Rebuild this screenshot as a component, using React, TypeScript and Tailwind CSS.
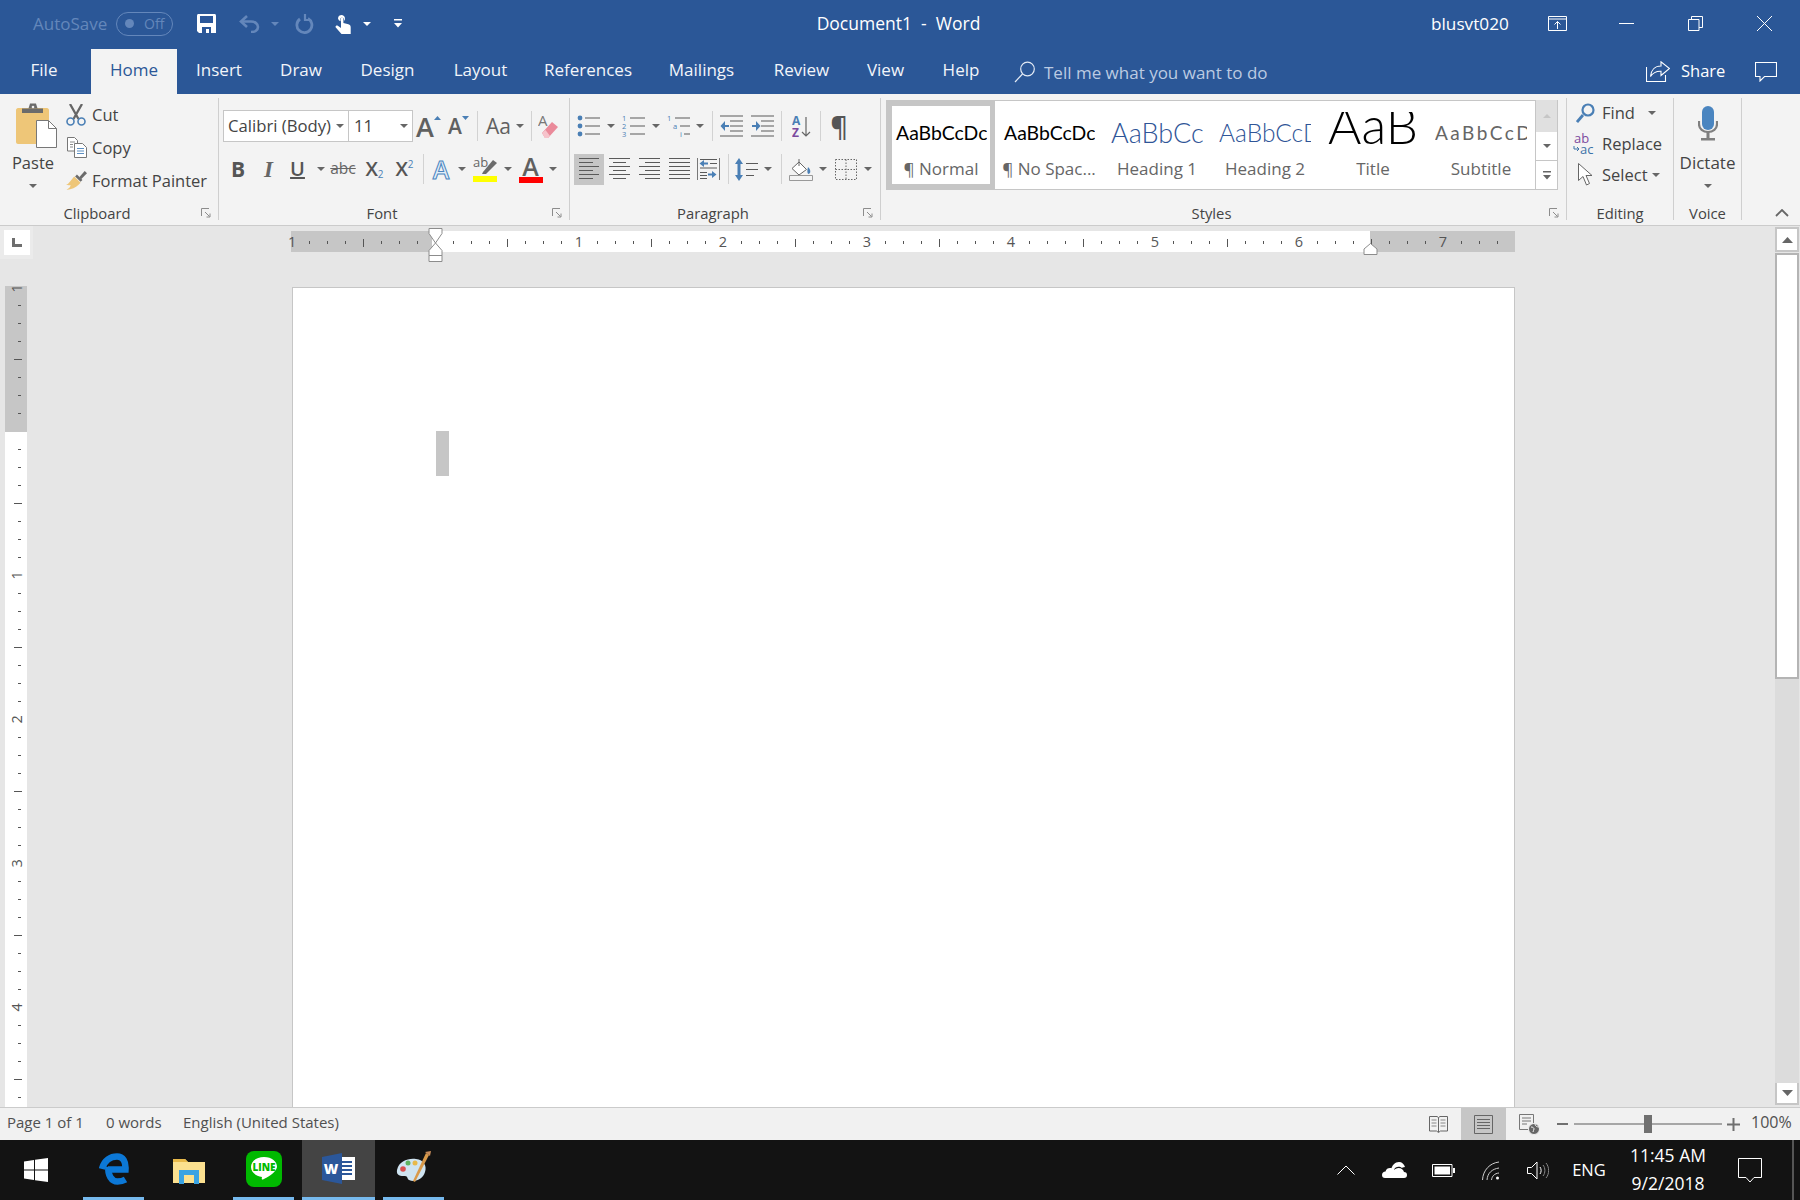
import type { ReactNode } from 'react'

const GREY = '#5a5a5a'
const BLUE = '#4a7fb5'

function Caret({ color = '#666' }: { color?: string }) {
  return (
    <svg width="8" height="4" viewBox="0 0 8 4" className="shrink-0">
      <path d="M0 0h8L4 4z" fill={color} />
    </svg>
  )
}

function CaretCell() {
  return (
    <div className="flex w-[8px] justify-center">
      <Caret />
    </div>
  )
}

// fixed width slot, content centered
function Cell({ className, children }: { className: string; children?: ReactNode }) {
  return <div className={`flex shrink-0 items-center justify-center ${className}`}>{children}</div>
}

function Sep() {
  return <div className="h-[30px] w-px shrink-0 bg-[#d2d2d2]" />
}

function Launcher() {
  return (
    <svg width="10" height="10" viewBox="0 0 10 10" fill="none" stroke="#8c8c8c">
      <path d="M.5 8V.5H8" />
      <path d="M4 4l4.5 4.5M9 5.5V9H5.5" />
    </svg>
  )
}

function Group({
  label,
  launcher,
  className,
  children,
}: {
  label: string
  launcher?: boolean
  className: string
  children: ReactNode
}) {
  return (
    <div className={`mt-[4px] flex h-[122px] shrink-0 flex-col border-r border-[#cfcfcf] ${className}`}>
      <div className="h-[108px] leading-[20px]">{children}</div>
      <div className="flex h-[14px] items-center text-[14.8px] leading-[14px] text-[#444]">
        <div className="flex-1 text-center">{label}</div>
        {launcher && (
          <div className="flex w-[24px] justify-center">
            <Launcher />
          </div>
        )}
      </div>
    </div>
  )
}

function Lines({ rows, w = 22, h = 22, color = GREY }: { rows: [number, number, number][]; w?: number; h?: number; color?: string }) {
  return (
    <svg width={w} height={h} viewBox={`0 0 ${w} ${h}`} stroke={color} fill="none">
      {rows.map(([y, a, b], i) => (
        <path key={i} d={`M${a} ${y + 0.5}H${b}`} />
      ))}
    </svg>
  )
}

function SaveIcon() {
  return (
    <svg width="19" height="19" viewBox="0 0 19 19">
      <path d="M0 1.5C0 .6.6 0 1.5 0h16c.9 0 1.5.6 1.5 1.5V19H2l-2-2z" fill="#fff" />
      <path d="M3 2h13v7H3z" fill="#2b579a" />
      <path d="M5 13h9v6h-2v-4H9v4H5z" fill="#2b579a" />
    </svg>
  )
}

function UndoIcon() {
  return (
    <svg width="21" height="18" viewBox="0 0 21 18" fill="none" stroke="#6487bb" strokeWidth="2.6">
      <path d="M8 1L2 6.500 8 12" />
      <path d="M3 6.500h9c4 0 7 2.500 7 5.500s-3 5-7 5" />
    </svg>
  )
}

function RedoIcon() {
  return (
    <svg width="19" height="20" viewBox="0 0 19 20" fill="none" stroke="#6487bb" strokeWidth="2.8">
      <path d="M13 4.500A7.500 7.500 0 1 1 5 5" />
      <path d="M10 0v6h6" strokeWidth="2.200" />
    </svg>
  )
}

function TouchIcon() {
  return (
    <svg width="16" height="21" viewBox="0 0 16 21" fill="#fff">
      <path d="M3 5.500a3.500 3.500 0 1 1 6 2.400V6a2 2 0 0 0-3.500-.8v3A3.500 3.500 0 0 1 3 5.500z" />
      <path d="M6 5.500a1.200 1.200 0 0 1 2.400 0V10l5 1.200c1.500.5 2.300 1.400 2.300 3V21H6.500L.8 14.500c-.9-1.400.8-2.800 2-1.700L6 15z" />
    </svg>
  )
}

function CustomizeIcon({ color = '#fff' }: { color?: string }) {
  return (
    <svg width="8" height="9" viewBox="0 0 8 9" fill={color}>
      <path d="M0 0h8v1.500H0zM0 4h8L4 8.500z" />
    </svg>
  )
}

function DisplayIcon() {
  return (
    <svg width="19" height="15" viewBox="0 0 19 15" fill="none" stroke="#fff">
      <path d="M.5.500h18v14H.5zM.5 3h18" />
      <path d="M9.500 13V5.500M6.500 8.500l3-3 3 3" />
    </svg>
  )
}

function RestoreIcon() {
  return (
    <svg width="15" height="15" viewBox="0 0 15 15" fill="none" stroke="#fff">
      <path d="M.5 3.500h10.500v11H.5z" />
      <path d="M3.500 3.500V.5h11v11H11" />
    </svg>
  )
}

function SearchIcon() {
  return (
    <svg width="22" height="22" viewBox="0 0 22 22" fill="none" stroke="#e4ebf5" strokeWidth="1.200">
      <circle cx="13.500" cy="8" r="6.800" />
      <path d="M8.500 13L1 21" />
    </svg>
  )
}

function ShareIcon() {
  return (
    <svg width="24" height="21" viewBox="0 0 24 21" fill="none" stroke="#fff" strokeWidth="1.100">
      <path d="M.5 6v14.500h19V14" />
      <path d="M15 .8V5C9 5 5 9 4.500 15.500 7 11.500 10 10 15 10.200v4.300L23.500 7.500z" />
    </svg>
  )
}

function CommentIcon() {
  return (
    <svg width="22" height="20" viewBox="0 0 22 20" fill="none" stroke="#fff" strokeWidth="1.100">
      <path d="M.5.5h21v14H9.500l-4.500 4.500v-4.500H.5z" />
    </svg>
  )
}

function PasteIcon() {
  return (
    <svg width="41" height="45" viewBox="0 0 41 45">
      <path d="M2 5h29c1 0 2 1 2 2v32c0 1-1 2-2 2H2c-1 0-2-1-2-2V7c0-1 1-2 2-2z" fill="#eec678" />
      <path d="M6 5.500h21V10H6z" fill="#6b6b6b" />
      <path d="M14 .5h6l1.500 5H12.500z" fill="#6b6b6b" />
      <circle cx="17" cy="4" r="1.300" fill="#eee" />
      <path d="M20.500 17.500h12l8 8v19h-20z" fill="#fff" stroke="#777" />
      <path d="M32.500 17.500v8h8" fill="none" stroke="#777" />
    </svg>
  )
}

function ScissorsIcon() {
  return (
    <svg width="20" height="22" viewBox="0 0 20 22" fill="none">
      <path d="M4 0l8.500 15M16 0L7.500 15" stroke="#666" strokeWidth="2.300" />
      <circle cx="4.500" cy="17.500" r="3.500" stroke={BLUE} strokeWidth="1.600" />
      <circle cx="15.500" cy="17.500" r="3.500" stroke={BLUE} strokeWidth="1.600" />
    </svg>
  )
}

function CopyIcon() {
  return (
    <svg width="20" height="21" viewBox="0 0 20 21" fill="#fff" stroke="#777">
      <path d="M.5.500h7l3 3V14H.5z" />
      <path d="M7.500 6.500h8l4 4v10H7.500z" />
      <path d="M3 5h5M3 7.500h3M3 10h3" stroke="#8a8a8a" />
      <path d="M10 11.500h7M10 14h7M10 16.500h7" stroke="#5d8fc2" />
    </svg>
  )
}

function BrushIcon() {
  return (
    <svg width="23" height="21" viewBox="0 0 23 21">
      <path d="M9 6l7 7-2.500 2.500c-3 3-7 4.500-13 5.300C3 19 5 18 5 15.500 3 16 1.500 15.500 0 15.500 3 14 6.500 9 9 6z" fill="#eec678" />
      <path d="M10 6l6 6 2-2-6-6z" fill="#6b6b6b" />
      <path d="M14.500 7l6-7 2.500 2.500-6.500 6.500z" fill="#6b6b6b" />
    </svg>
  )
}

function EraserIcon() {
  return (
    <svg width="20" height="25" viewBox="0 0 20 25">
      <text x="0" y="12" fontSize="15" fill="#777" fontFamily="Open Sans, sans-serif">A</text>
      <path d="M4 19l10-11 6 5-10 11H7z" fill="#ea8a9a" />
      <path d="M4 19l3 5h3l2-2-4.500-6z" fill="#f6c3cb" />
    </svg>
  )
}

function HighlightIcon() {
  return (
    <div className="flex h-[25px] w-[24px] flex-col">
      <svg width="24" height="18" viewBox="0 0 24 18">
        <text x="0" y="10" fontSize="13" fill="#666" fontFamily="Open Sans, sans-serif">ab</text>
        <path d="M10 15l10-12 4 3-11 11H9z" fill="#6b6b6b" />
      </svg>
      <div className="mt-[1px] h-[6px] bg-[#ffff00]" />
    </div>
  )
}

function FontColorIcon() {
  return (
    <div className="flex h-[28px] w-[24px] flex-col items-center">
      <div className="h-[22px] text-[25px] font-semibold leading-[22px] text-[#606060]">A</div>
      <div className="h-[6px] w-full bg-[#ff0000]" />
    </div>
  )
}

function BulletsIcon() {
  return (
    <svg width="23" height="24" viewBox="0 0 23 24" fill={BLUE}>
      <circle cx="3" cy="4" r="2.400" />
      <circle cx="3" cy="12" r="2.400" />
      <circle cx="3" cy="20" r="2.400" />
      <path d="M8 3.500h15v1H8zM8 11.500h15v1H8zM8 19.500h15v1H8z" fill={GREY} />
    </svg>
  )
}

function NumberingIcon() {
  return (
    <svg width="23" height="24" viewBox="0 0 23 24" fill={BLUE} fontFamily="Open Sans, sans-serif" fontSize="7.500">
      <text x="0" y="7">1</text>
      <text x="0" y="15">2</text>
      <text x="0" y="23">3</text>
      <path d="M8 3.500h15v1H8zM8 11.500h15v1H8zM8 19.500h15v1H8z" fill={GREY} />
    </svg>
  )
}

function MultilevelIcon() {
  return (
    <svg width="23" height="24" viewBox="0 0 23 24" fill={BLUE} fontFamily="Open Sans, sans-serif" fontSize="7.500">
      <text x="0" y="7">1</text>
      <text x="6" y="15">a</text>
      <text x="13" y="23">i</text>
      <path d="M8 3.500h15v1H8zM13 11.500h10v1H13zM17 19.500h6v1h-6z" fill={GREY} />
    </svg>
  )
}

function IndentIcon({ flip }: { flip?: boolean }) {
  return (
    <svg width="23" height="22" viewBox="0 0 23 22">
      <path d="M0 .5h23v1H0zM10 5.500h13v1H10zM10 10.500h13v1H10zM10 15.500h13v1H10zM0 20.500h23v1H0z" fill={GREY} />
      {flip ? (
        <path d="M1 10h4V6l4.500 5L5 16v-4H1z" fill={BLUE} />
      ) : (
        <path d="M9 10H5V6l-4.500 5L5 16v-4h4z" fill={BLUE} />
      )}
    </svg>
  )
}

function SortIcon() {
  return (
    <svg width="19" height="23" viewBox="0 0 19 23" fontFamily="Open Sans, sans-serif" fontSize="12" fontWeight="700">
      <text x="0" y="10" fill="#4a7fb5">A</text>
      <text x="0" y="22" fill="#7b4a9e">Z</text>
      <path d="M14 2v19M10 17l4 4 4-4" fill="none" stroke="#666" strokeWidth="1.200" />
    </svg>
  )
}

function ReverseIcon() {
  return (
    <svg width="23" height="22" viewBox="0 0 23 22" fill={BLUE}>
      <path d="M.5 0v22" stroke="#777" fill="none" />
      <path d="M22.500 0v22" stroke="#777" fill="none" />
      <path d="M3 1h17v1H3zM13 5h7v1h-7zM3 14h7v1H3zM3 17h7v1H3zM3 20h7v1H3zM3 9.500h17v1H3z" fill={GREY} />
      <path d="M11 4.500H7V2L2.500 5.500 7 9V6.500h4zM11 15.500h4V13l4.500 3.500L15 20v-2.500h-4z" />
    </svg>
  )
}

function SpacingIcon() {
  return (
    <svg width="23" height="23" viewBox="0 0 23 23">
      <path d="M4 0l4 6H5.500v11H8l-4 6-4-6h2.500V6H0z" fill={BLUE} />
      <path d="M11 5h12v1H11zM11 11h12v1H11zM11 17h8v1h-8z" fill={GREY} />
    </svg>
  )
}

function ShadingIcon() {
  return (
    <svg width="24" height="23" viewBox="0 0 24 23" fill="none">
      <path d="M10 4l7.500 7.500L10 17l-7-6.500z" fill="#fff" stroke="#666" />
      <path d="M10 1v7" stroke="#666" />
      <path d="M19 9c2.500 2.500 3 5 1.500 6.500S17.500 15 19 9z" fill={BLUE} />
      <path d="M.5 17.500h23v5H.5z" stroke="#999" />
    </svg>
  )
}

function BordersIcon() {
  return (
    <svg width="22" height="21" viewBox="0 0 22 21" fill="none" stroke="#666" strokeDasharray="1.500 1.500">
      <path d="M.5.500h21v20H.5z" />
      <path d="M11 .5v20M.5 10.500h21" />
    </svg>
  )
}

function FindIcon() {
  return (
    <svg width="19" height="20" viewBox="0 0 19 20" fill="none" stroke={BLUE}>
      <circle cx="12" cy="7" r="5.500" strokeWidth="2.200" />
      <path d="M7 12l-6 7" strokeWidth="2.800" />
    </svg>
  )
}

function ReplaceIcon() {
  return (
    <svg width="23" height="22" viewBox="0 0 23 22" fontFamily="Open Sans, sans-serif" fontSize="13">
      <text x="1" y="10" fill="#7b4a9e">ab</text>
      <text x="7" y="21" fill="#3d72a8">ac</text>
      <path d="M1 13v3h5M4 14l2 2-2 2" fill="none" stroke="#3d72a8" />
    </svg>
  )
}

function CursorIcon() {
  return (
    <svg width="15" height="23" viewBox="0 0 15 23" fill="#fff" stroke="#666">
      <path d="M.5.500v17l4.500-4 3.500 8.500 3-1.500-3.500-8h6z" />
    </svg>
  )
}

function MicIcon() {
  return (
    <svg width="20" height="35" viewBox="0 0 20 35">
      <rect x="4" y="0" width="12" height="24" rx="6" fill="#4a85c0" />
      <path d="M1 15v3c0 5 4 8 9 8s9-3 9-8v-3" fill="none" stroke="#7f7f7f" strokeWidth="2.200" />
      <path d="M8.500 26h3v7h-3zM3 32h14v2.500H3z" fill="#7f7f7f" />
    </svg>
  )
}

function TabSelector() {
  return (
    <div className="flex h-[33px] w-[33px] items-center justify-center bg-[#ebebeb]">
      <div className="flex h-[25px] w-[26px] items-center justify-center bg-white">
        <svg width="10" height="9" viewBox="0 0 10 9" fill="#6e6e6e">
          <path d="M0 0h3v6h7v3H0z" />
        </svg>
      </div>
    </div>
  )
}

const hTicks = Array.from({ length: 67 }, (_, i) => i + 1)
const vTicks = Array.from({ length: 45 }, (_, i) => i + 1)

function HorizontalRuler() {
  return (
    <div className="relative mt-[5px] flex h-[21px] w-[1224px] bg-[linear-gradient(90deg,#c6c6c6_141px,#fff_141px,#fff_1079px,#c6c6c6_1079px)] pt-[2px]">
      <div className="flex w-[9px] shrink-0 items-center">
        <span className="-ml-[3px] text-[14.500px] leading-none text-[#555]">1</span>
      </div>
      {hTicks.map((n) => (
        <div key={n} className="flex w-[18px] shrink-0 items-center justify-center">
          {n === 8 ? null : n % 8 === 0 ? (
            <span className="text-[14.500px] leading-none text-[#555]">{n / 8 - 1}</span>
          ) : (
            <div className={n % 4 === 0 ? 'h-[8px] w-px bg-[#555]' : 'h-[3px] w-px bg-[#555]'} />
          )}
        </div>
      ))}
      {/* indent markers sit over the ruler */}
      <svg width="15" height="34" viewBox="0 0 15 34" className="absolute left-[137px] top-[-3px]" fill="#fff" stroke="#8c8c8c">
        <path d="M1 .5h13v5L7.500 15 1 5.500z" />
        <path d="M7.500 15L14 22.500v5H1v-5z" />
        <path d="M1 27.500h13v6H1z" />
      </svg>
      <svg width="15" height="12" viewBox="0 0 15 12" className="absolute left-[1072px] top-[12px]" fill="#fff" stroke="#8c8c8c">
        <path d="M7.500.5L14 6v5.500H1V6z" />
      </svg>
    </div>
  )
}

function VerticalRuler() {
  return (
    <div className="ml-[5px] mt-[27px] h-[821px] w-[22px] overflow-hidden bg-[linear-gradient(#c6c6c6_146px,#fff_146px)]">
      <div className="flex h-[10px] items-start justify-center">
        <span className="-mt-[5px] ml-[2px] -rotate-90 text-[14.500px] leading-none text-[#555]">1</span>
      </div>
      {vTicks.map((n) => (
        <div key={n} className="flex h-[18px] items-center justify-center">
          {n === 8 ? null : n % 8 === 0 ? (
            <span className="ml-[2px] -rotate-90 text-[14.500px] leading-none text-[#555]">{n / 8 - 1}</span>
          ) : n % 4 === 0 ? (
            <div className="ml-[3px] h-px w-[8px] bg-[#555]" />
          ) : (
            <div className="ml-[6px] h-px w-[3px] bg-[#555]" />
          )}
        </div>
      ))}
    </div>
  )
}

function StyleCell({
  sample,
  label,
  selected,
  big,
}: {
  sample: string
  label: string
  selected?: boolean
  big?: boolean
}) {
  return (
    <div className={`flex h-full w-[108px] shrink-0 flex-col items-center ${selected ? 'shadow-[inset_0_0_0_5px_#c6c6c6]' : ''}`}>
      {big ? (
        <div className="h-[64px] w-[92px] pt-[11px]">
          <div className="flex h-[40px] justify-center overflow-hidden whitespace-nowrap">
            <div className={sample}>AaB</div>
          </div>
        </div>
      ) : (
        <div className="flex h-[64px] w-[92px] items-center justify-start overflow-hidden whitespace-nowrap">
          <div className={sample}>AaBbCcDc</div>
        </div>
      )}
      <div className="-mt-[2px] text-[17px] leading-[12px] text-[#666]">{label}</div>
    </div>
  )
}

export default function App() {
  return (
    <div className="flex h-[1200px] w-[1800px] flex-col overflow-hidden bg-[#e6e6e6] font-['Open_Sans',sans-serif] text-[16.500px] text-[#444]">
      {/* Title bar */}
      <div className="flex h-[49px] shrink-0 items-center bg-[#2b5797] pb-[2px] text-white">
        <div className="flex w-[760px] shrink-0 items-center pl-[33px]">
          <div className="w-[83px] whitespace-nowrap text-[17px] text-[#6487bb]">AutoSave</div>
          <div className="flex h-[24px] w-[57px] items-center rounded-full border border-[#6487bb] pl-[8px] text-[14px] text-[#6487bb]">
            <div className="h-[9px] w-[9px] rounded-full bg-[#6487bb]" />
            <span className="ml-[10px]">Off</span>
          </div>
          <div className="ml-[24px]"><SaveIcon /></div>
          <div className="ml-[23px]"><UndoIcon /></div>
          <div className="ml-[11px]"><Caret color="#6487bb" /></div>
          <div className="ml-[16px]"><RedoIcon /></div>
          <div className="ml-[21px]"><TouchIcon /></div>
          <div className="ml-[12px]"><Caret color="#fff" /></div>
          <div className="ml-[23px]"><CustomizeIcon /></div>
        </div>
        <div className="w-[277px] shrink-0 whitespace-pre text-center text-[17.500px]">Document1  -  Word</div>
        <div className="ml-[394px] w-[117px] shrink-0 text-[17.200px]">blusvt020</div>
        <DisplayIcon />
        <div className="ml-[52px] h-px w-[15px] bg-white" />
        <div className="ml-[54px]"><RestoreIcon /></div>
        <svg width="15" height="15" viewBox="0 0 15 15" stroke="#fff" className="ml-[54px]">
          <path d="M0 0l15 15M15 0L0 15" />
        </svg>
      </div>

      {/* Tabs */}
      <div className="flex h-[45px] shrink-0 items-center bg-[#2b5797] text-[17px] text-[#f2f5fa]">
        <Cell className="w-[88px] pb-[3px]">File</Cell>
        <Cell className="ml-[3px] h-full w-[86px] bg-[#f3f3f3] pb-[3px] text-[#2b5797]">Home</Cell>
        <Cell className="w-[84px] pb-[3px]">Insert</Cell>
        <Cell className="w-[80px] pb-[3px]">Draw</Cell>
        <Cell className="w-[93px] pb-[3px]">Design</Cell>
        <Cell className="w-[93px] pb-[3px]">Layout</Cell>
        <Cell className="w-[122px] pb-[3px]">References</Cell>
        <Cell className="w-[105px] pb-[3px]">Mailings</Cell>
        <Cell className="w-[95px] pb-[3px]">Review</Cell>
        <Cell className="w-[73px] pb-[3px]">View</Cell>
        <Cell className="w-[78px] pb-[3px]">Help</Cell>
        <div className="ml-[14px]"><SearchIcon /></div>
        <div className="ml-[8px] w-[602px] shrink-0 pt-[2px] text-[#bccbe2]">Tell me what you want to do</div>
        <ShareIcon />
        <div className="ml-[11px] w-[74px] shrink-0 text-[16.500px] text-white">Share</div>
        <CommentIcon />
      </div>

      {/* Ribbon */}
      <div className="flex h-[132px] shrink-0 border-b border-[#cbcbcb] bg-[#f3f3f3]">
        <Group label="Clipboard" launcher className="w-[219px]">
          <div className="flex">
            <div className="flex w-[66px] flex-col items-center pt-[5px]">
              <div className="ml-[7px]"><PasteIcon /></div>
              <div className="mt-[4px] leading-[21px]">Paste</div>
              <div className="mt-[11px]"><Caret /></div>
            </div>
            <div className="flex flex-col whitespace-nowrap">
              <div className="flex h-[33px] items-center">
                <Cell className="w-[26px] pr-[6px]"><ScissorsIcon /></Cell>
                Cut
              </div>
              <div className="flex h-[33px] items-center">
                <Cell className="w-[26px] pr-[5px]"><CopyIcon /></Cell>
                Copy
              </div>
              <div className="flex h-[33px] items-center">
                <Cell className="w-[26px] pr-[5px]"><BrushIcon /></Cell>
                Format Painter
              </div>
            </div>
          </div>
        </Group>

        <Group label="Font" launcher className="w-[351px]">
          <div className="mt-[12px] flex h-[32px] items-center pl-[4px]">
            <div className="flex h-[32px] w-[126px] shrink-0 items-center border border-[#c6c6c6] bg-white pl-[4px] text-[16.700px]">
              <span className="w-[108px] whitespace-nowrap">Calibri (Body)</span>
              <Caret />
            </div>
            <div className="flex h-[32px] w-[64px] shrink-0 items-center border border-l-0 border-[#c6c6c6] bg-white pl-[5px] text-[16.700px]">
              <span className="w-[46px]">11</span>
              <Caret />
            </div>
            <Cell className="w-[31px]">
              <span className="text-[27px] font-semibold leading-none text-[#606060]">A</span>
              <svg width="7" height="4" className="mb-[16px]"><path d="M0 4h7L3.500 0z" fill={BLUE} /></svg>
            </Cell>
            <Cell className="w-[29px]">
              <span className="text-[21px] font-semibold leading-none text-[#606060]">A</span>
              <svg width="7" height="4" className="mb-[16px]"><path d="M0 0h7L3.500 4z" fill={BLUE} /></svg>
            </Cell>
            <div className="w-[4px]" />
            <Sep />
            <Cell className="w-[35px] pl-[6px] text-[21px] leading-none text-[#606060]">Aa</Cell>
            <Cell className="w-[14px]"><Caret /></Cell>
            <div className="w-[4px]" />
            <Sep />
            <Cell className="w-[32px]"><EraserIcon /></Cell>
          </div>
          <div className="mt-[11px] flex h-[32px] items-center pl-[4px] leading-none">
            <Cell className="w-[30px] text-[21px] font-bold text-[#555]">B</Cell>
            <Cell className="w-[31px] font-['Liberation_Serif',serif] text-[23px] font-bold italic text-[#666]">I</Cell>
            <Cell className="w-[27px] text-[20px] font-semibold text-[#555] underline">U</Cell>
            <Cell className="w-[20px]"><Caret /></Cell>
            <Cell className="w-[24px] text-[15.500px] text-[#666] line-through">abc</Cell>
            <Cell className="w-[39px] text-[20px] font-semibold text-[#555]">
              X<span className="mt-[10px] text-[10px] font-normal text-[#4a7fb5]">2</span>
            </Cell>
            <Cell className="w-[21px] text-[20px] font-semibold text-[#555]">
              X<span className="mb-[10px] text-[10px] font-normal text-[#4a7fb5]">2</span>
            </Cell>
            <div className="w-[8px]" />
            <Sep />
            <Cell className="w-[34px] text-[25px] font-semibold text-[#e3eef8] [-webkit-text-stroke:1px_#4a85c0]">A</Cell>
            <CaretCell />
            <Cell className="w-[38px]"><HighlightIcon /></Cell>
            <CaretCell />
            <Cell className="w-[37px]"><FontColorIcon /></Cell>
            <CaretCell />
          </div>
        </Group>

        <Group label="Paragraph" launcher className="w-[311px]">
          <div className="mt-[12px] flex h-[32px] items-center">
            <Cell className="w-[37px]"><BulletsIcon /></Cell>
            <CaretCell />
            <Cell className="w-[37px]"><NumberingIcon /></Cell>
            <CaretCell />
            <Cell className="w-[36px]"><MultilevelIcon /></Cell>
            <CaretCell />
            <div className="w-[8px]" />
            <Sep />
            <Cell className="w-[37px]"><IndentIcon /></Cell>
            <Cell className="w-[24px]"><IndentIcon flip /></Cell>
            <div className="w-[7px]" />
            <Sep />
            <Cell className="w-[38px]"><SortIcon /></Cell>
            <Sep />
            <Cell className="w-[36px] text-[27px] font-semibold leading-none text-[#555]">¶</Cell>
          </div>
          <div className="mt-[11px] flex h-[32px] items-center">
            <div className="w-[4px]" />
            <Cell className="h-[31px] w-[30px] bg-[#c6c6c6]">
              <Lines w={20} rows={[[0, 0, 20], [4, 0, 14], [8, 0, 20], [12, 0, 14], [16, 0, 20], [20, 0, 14]]} />
            </Cell>
            <Cell className="w-[31px]">
              <Lines w={21} rows={[[0, 0, 21], [4, 4, 17], [8, 0, 21], [12, 4, 17], [16, 0, 21], [20, 4, 17]]} />
            </Cell>
            <Cell className="w-[29px]">
              <Lines w={21} rows={[[0, 0, 21], [4, 6, 21], [8, 0, 21], [12, 6, 21], [16, 0, 21], [20, 6, 21]]} />
            </Cell>
            <Cell className="w-[31px]">
              <Lines w={21} rows={[[0, 0, 21], [4, 0, 21], [8, 0, 21], [12, 0, 21], [16, 0, 21], [20, 0, 21]]} />
            </Cell>
            <Cell className="w-[27px]"><ReverseIcon /></Cell>
            <div className="w-[6px]" />
            <Sep />
            <Cell className="w-[35px]"><SpacingIcon /></Cell>
            <CaretCell />
            <div className="w-[9px]" />
            <Sep />
            <Cell className="w-[37px]"><ShadingIcon /></Cell>
            <CaretCell />
            <Cell className="w-[37px]"><BordersIcon /></Cell>
            <CaretCell />
          </div>
        </Group>

        <Group label="Styles" launcher className="w-[686px]">
          <div className="ml-[5px] mt-[2px] flex h-[90px]">
            <div className="flex h-full w-[650px] border border-[#c6c6c6] bg-white">
              <StyleCell selected sample="pl-[1px] font-['Lato',sans-serif] text-[19.400px] text-black" label="¶ Normal" />
              <StyleCell sample="pl-[1px] font-['Lato',sans-serif] text-[19.400px] text-black" label="¶ No Spac..." />
              <StyleCell sample="font-['Lato',sans-serif] text-[27px] font-light text-[#2f5597]" label="Heading 1" />
              <StyleCell sample="font-['Lato',sans-serif] text-[24.500px] font-light text-[#2f5597]" label="Heading 2" />
              <StyleCell big sample="-mt-[12px] font-['Lato',sans-serif] text-[51px] font-light leading-[50px] text-black" label="Title" />
              <StyleCell sample="font-['Lato',sans-serif] text-[19px] tracking-[2.500px] text-[#666]" label="Subtitle" />
            </div>
            <div className="flex w-[22px] shrink-0 flex-col border-b border-r border-[#c6c6c6]">
              <Cell className="h-[32px] bg-[#e0e0e0]">
                <svg width="8" height="4"><path d="M0 4h8L4 0z" fill="#c6c6c6" /></svg>
              </Cell>
              <Cell className="h-[29px] border-b border-[#c6c6c6] bg-white"><Caret /></Cell>
              <Cell className="flex-1 bg-white">
                <CustomizeIcon color="#666" />
              </Cell>
            </div>
          </div>
        </Group>

        <Group label="Editing" className="w-[107px]">
          <div className="-mt-[1px] flex h-[31px] items-center">
            <Cell className="w-[35px] pl-[2px]"><FindIcon /></Cell>
            <span>Find</span>
            <div className="ml-[13px]"><Caret /></div>
          </div>
          <div className="flex h-[31px] items-center">
            <Cell className="w-[35px]"><ReplaceIcon /></Cell>
            <span>Replace</span>
          </div>
          <div className="flex h-[31px] items-center">
            <Cell className="w-[35px] pl-[1px]"><CursorIcon /></Cell>
            <span>Select</span>
            <div className="ml-[4px]"><Caret /></div>
          </div>
        </Group>

        <Group label="Voice" className="w-[68px]">
          <div className="flex flex-col items-center pt-[8px]">
            <MicIcon />
            <div className="mt-[11px] text-[17px] leading-[21px]">Dictate</div>
            <div className="mt-[11px]"><Caret /></div>
          </div>
        </Group>

        <div className="flex flex-1 items-end justify-end pb-[8px] pr-[11px]">
          <svg width="14" height="8" viewBox="0 0 14 8" fill="none" stroke="#666" strokeWidth="1.800">
            <path d="M1 7l6-6 6 6" />
          </svg>
        </div>
      </div>

      {/* Document area */}
      <div className="flex min-h-0 flex-1">
        <div className="flex w-[291px] shrink-0 flex-col">
          <TabSelector />
          <VerticalRuler />
        </div>
        <div className="flex w-[1224px] shrink-0 flex-col">
          <HorizontalRuler />
          <div className="ml-[1px] mt-[35px] flex-1 border-x border-t border-[#c6c6c6] bg-white">
            <div className="ml-[143px] mt-[143px] h-[45px] w-[13px] bg-[#c6c6c6]" />
          </div>
        </div>
        <div className="ml-auto mr-[1px] flex w-[24px] flex-col pb-[2px] pt-[1px]">
          <Cell className="h-[25px] border-2 border-[#c6c6c6] bg-white">
            <svg width="11" height="6"><path d="M0 6h11L5.500 0z" fill="#666" /></svg>
          </Cell>
          <div className="mt-[1px] h-[426px] border-2 border-[#b4b4b4] bg-white" />
          <div className="flex-1 bg-[#dcdcdc]" />
          <Cell className="h-[22px] border-2 border-t-0 border-[#c6c6c6] bg-white">
            <svg width="11" height="6"><path d="M0 0h11L5.500 6z" fill="#666" /></svg>
          </Cell>
        </div>
      </div>

      {/* Status bar */}
      <div className="flex h-[33px] shrink-0 items-center border-t border-[#cbcbcb] bg-[#f1f1f1] text-[15px] text-[#505050]">
        <div className="ml-[7px] w-[99px] shrink-0 pb-[4px]">Page 1 of 1</div>
        <div className="w-[77px] shrink-0 pb-[4px]">0 words</div>
        <div className="w-[1246px] shrink-0 pb-[4px]">English (United States)</div>
        <svg width="19" height="19" viewBox="0 0 19 19" fill="none" stroke="#666">
          <path d="M.5 1.500h7.500l1.500 1 1.500-1h7.500V16h-7l-2 1.500-2-1.500h-7zM9.500 2.500V17" />
          <path d="M2.500 5h5M2.500 8h5M2.500 11h5M11.500 5h5M11.500 8h5M11.500 11h5" stroke="#888" />
        </svg>
        <Cell className="ml-[13px] h-full w-[45px] bg-[#c6c6c6]">
          <svg width="19" height="19" viewBox="0 0 19 19" fill="none" stroke="#666">
            <path d="M.5.500h18v18H.5z" />
            <path d="M3 4.500h13M3 7.500h13M3 10.500h13M3 13.500h13" />
          </svg>
        </Cell>
        <svg width="21" height="21" viewBox="0 0 21 21" fill="none" stroke="#777" className="ml-[13px]">
          <path d="M.5.500h14v15H.5zM3 4h9M3 7h9M3 10h5" />
          <circle cx="15" cy="15" r="5.500" fill="#666" stroke="#f1f1f1" />
          <path d="M12 13c2 0 3 1 3 2s-1 2-1 3M16 10c0 2 2 3 4 3" stroke="#f1f1f1" />
        </svg>
        <div className="ml-[17px] h-[2px] w-[11px] bg-[#707070]" />
        <div className="relative ml-[6px] h-[2px] w-[148px] bg-[#a6a6a6]">
          <div className="absolute left-[70px] top-[-8px] h-[18px] w-[8px] bg-[#707070]" />
        </div>
        <svg width="13" height="13" viewBox="0 0 13 13" fill="#707070" className="ml-[5px]">
          <path d="M0 5.500h13v2H0zM5.500 0h2v13h-2z" />
        </svg>
        <div className="ml-[11px] pb-[4px] text-[16px]">100%</div>
      </div>

      {/* Taskbar */}
      <div className="flex h-[60px] shrink-0 items-center bg-[#131313] text-white">
        <Cell className="h-full w-[72px]">
          <svg width="24" height="24" viewBox="0 0 24 24" fill="#fff">
            <path d="M0 3.500L10 2v9.500H0zM11 1.800L24 0v11.500H11zM0 12.500h10V22L0 20.500zM11 12.500h13V24l-13-1.800z" />
          </svg>
        </Cell>
        <Cell className="ml-[11px] h-full w-[61px] border-b-[3px] border-[#76b9ed]">
          <svg width="30" height="32" viewBox="0 0 30 32" fill="none" stroke="#0c78d6" strokeWidth="6.500">
            <path d="M3 16C5 7 12 3.500 18 3.500c6 0 9 5 8.500 13H9" />
            <path d="M9.500 14c-1 8 3 14.500 9 14.500 3 0 6-.8 8-2" />
          </svg>
        </Cell>
        <Cell className="ml-[14px] h-full w-[61px]">
          <svg width="32" height="27" viewBox="0 0 32 27">
            <path d="M0 2h12l3 3h17v21H0z" fill="#fbe08f" />
            <path d="M0 2h12l3 3H0z" fill="#e8b94a" />
            <path d="M6 27V13h20v14h-5v-9h-10v9z" fill="#3aa3e3" />
          </svg>
        </Cell>
        <Cell className="ml-[14px] h-full w-[61px] border-b-[3px] border-[#76b9ed]">
          <svg width="36" height="36" viewBox="0 0 36 36">
            <rect width="36" height="36" rx="8" fill="#00b900" />
            <path d="M18 6C10 6 5 10.500 5 16c0 5 4.500 9 11 10-.4 1.500-.5 3 1 2.500 3-1.500 13-6.500 14-12.500C31 10.500 26 6 18 6z" fill="#fff" />
            <text x="18" y="19.500" textAnchor="middle" fontSize="10" fontWeight="800" fill="#00b900" fontFamily="Open Sans, sans-serif">LINE</text>
          </svg>
        </Cell>
        <Cell className="ml-[8px] h-full w-[73px] border-b-[3px] border-[#76b9ed] bg-[#444]">
          <svg width="33" height="31" viewBox="0 0 33 31">
            <path d="M0 4L20 0v31L0 27z" fill="#2b579a" />
            <path d="M20 4h13v23H20z" fill="#fff" />
            <path d="M20 8h10v2H20zM20 12h10v2H20zM20 16h10v2H20zM20 20h10v2H20z" fill="#2b579a" />
            <text x="9" y="21" textAnchor="middle" fontSize="14" fontWeight="800" fill="#fff" fontFamily="Open Sans, sans-serif">W</text>
          </svg>
        </Cell>
        <Cell className="ml-[8px] h-full w-[61px] border-b-[3px] border-[#76b9ed]">
          <svg width="35" height="35" viewBox="0 0 35 35">
            <path d="M1 19C3 10 12 7 20 8c8 1 11 7 9 13-2 7-10 11-16 8-2-1-1-4-4-4-4 0-9 0-8-6z" fill="#cfe4f1" />
            <circle cx="7" cy="18" r="2.800" fill="#d94f4f" />
            <circle cx="12" cy="12" r="2.500" fill="#5fb35f" />
            <circle cx="19" cy="12" r="2.500" fill="#e8b94a" />
            <path d="M30 2l3 2-14 27-2-1z" fill="#d99a4a" />
            <path d="M29 1l5 4 1-5z" fill="#c98d5a" />
          </svg>
        </Cell>

        <div className="ml-auto flex h-full items-center">
          <Cell className="w-[48px]">
            <svg width="18" height="10" viewBox="0 0 18 10" fill="none" stroke="#fff">
              <path d="M.5 9.500L9 1l8.500 8.500" />
            </svg>
          </Cell>
          <Cell className="w-[49px]">
            <svg width="25" height="16" viewBox="0 0 25 16" fill="#fff">
              <path d="M9 8c1-5 4-8 8-8 3 0 5 2 6 5-2 0-3 1-3 1-2-2-7-2-8 2z" />
              <path d="M3 16c-2 0-3-1-3-3 0-2 1.500-3.500 3.500-3.500C4 7 6 6 8 6c1.500 0 3 .5 4 2 1-1 2.500-2 4.500-2 3 0 5 2 5.500 4 2 0 3 1 3 3 0 2-1 3-3 3z" />
            </svg>
          </Cell>
          <Cell className="w-[48px]">
            <svg width="23" height="13" viewBox="0 0 23 13" fill="none" stroke="#fff">
              <path d="M.5.500h19.500v12H.5z" />
              <path d="M2.500 2.500h15.500v8H2.500z" fill="#fff" stroke="none" />
              <path d="M21 4h2v5h-2z" fill="#fff" stroke="none" />
            </svg>
          </Cell>
          <Cell className="w-[48px]">
            <svg width="18" height="19" viewBox="0 0 18 19" fill="none" stroke="#cfcfcf">
              <path d="M.5 19C1 9 8 2 17 1M5 19c.5-7 5-11 12-12M9.500 19c.5-4 3-6.500 7.500-7" />
              <circle cx="15.500" cy="17" r="1.500" fill="#fff" stroke="none" />
            </svg>
          </Cell>
          <Cell className="w-[46px]">
            <svg width="22" height="19" viewBox="0 0 22 19" fill="none" stroke="#fff">
              <path d="M.5 6.500h4L10 1v17l-5.500-5.500h-4z" />
              <path d="M13 6c1.500 2 1.500 5 0 7" />
              <path d="M16 4c2.500 3 2.500 8 0 11M19 2c3.500 4 3.500 11 0 15" stroke="#888" />
            </svg>
          </Cell>
          <Cell className="w-[56px] text-[16.500px]">ENG</Cell>
          <div className="flex w-[102px] flex-col items-center pb-[2px] text-[17.500px] leading-[28px]">
            <div>11:45 AM</div>
            <div>9/2/2018</div>
          </div>
          <Cell className="w-[62px]">
            <svg width="24" height="25" viewBox="0 0 24 25" fill="none" stroke="#fff">
              <path d="M.5.500h23v19h-7.500l-4 4.500-4-4.500H.5z" />
            </svg>
          </Cell>
          <div className="ml-[11px] mr-[6px] h-full w-[2px] bg-[#555]" />
        </div>
      </div>
    </div>
  )
}
